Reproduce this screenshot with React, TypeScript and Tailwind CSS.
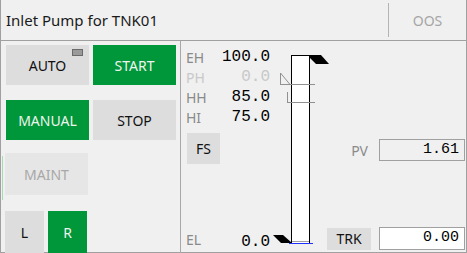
import React from "react";

const sans = { fontFamily: '"Noto Sans", "Open Sans", sans-serif' };
const mono = { fontFamily: '"Liberation Mono", "DejaVu Sans Mono", monospace' };

function Btn({
  children,
  className,
}: {
  children: React.ReactNode;
  className: string;
}) {
  return (
    <div className={`relative flex items-center justify-center text-[14px] ${className}`}>
      {children}
    </div>
  );
}

function ScaleRow({
  label,
  value,
  dim,
}: {
  label: string;
  value: string;
  dim?: boolean;
}) {
  return (
    <div className="flex h-[20px] items-center justify-between">
      <span className={`text-[14px] ${dim ? "text-[#c8c8c8]" : "text-[#8a8a8a]"}`}>{label}</span>
      <span
        className={`text-[16px] leading-none ${dim ? "text-[#c8c8c8]" : "text-black"}`}
        style={mono}
      >
        {value}
      </span>
    </div>
  );
}

export default function App() {
  return (
    <div
      className="flex h-[253px] w-[467px] flex-col border-x border-b border-[#a0a0a0] bg-[#f0f0f0]"
      style={sans}
    >
      {/* title bar */}
      <div className="flex h-[41px] shrink-0 items-stretch border-b border-[#a0a0a0]">
        <div className="flex flex-1 items-center pl-[5px] text-[15px] text-[#1a1a1a]">
          Inlet Pump for TNK01
        </div>
        <div className="my-[3px] w-px bg-[#b4b4b4]" />
        <div className="flex w-[77px] items-center justify-center text-[14px] text-[#a6a6a6]">
          OOS
        </div>
      </div>

      {/* body */}
      <div className="flex flex-1">
        {/* left panel */}
        <div className="flex w-[180px] flex-col border-r border-[#a8a8a8]">
          <div className="ml-[5px] mt-[4px] flex gap-[4px]">
            <Btn className="h-[40px] w-[83px] bg-[#dddddd] text-[#111]">
              AUTO
              <span className="absolute right-[6px] top-[4px] h-[7px] w-[11px] border border-[#6a6a6a] bg-[#9a9a9a]" />
            </Btn>
            <Btn className="h-[40px] w-[83px] bg-[#00963a] text-[#eef4ee]">START</Btn>
          </div>
          <div className="ml-[5px] mt-[15px] flex gap-[4px]">
            <Btn className="h-[40px] w-[83px] bg-[#00963a] text-[#eef4ee]">MANUAL</Btn>
            <Btn className="h-[40px] w-[83px] bg-[#dddddd] text-[#111]">STOP</Btn>
          </div>
          <div className="mt-[13px] flex">
            <div className="ml-px mt-[3px] h-[44px] w-px bg-[#a8dcb0]" />
            <Btn className="ml-[2px] h-[42px] w-[83px] bg-[#e6e6e6] text-[#a8a8a8]">MAINT</Btn>
          </div>
          <div className="ml-[4px] mt-[11px] flex gap-[4px]">
            <Btn className="h-[42px] w-[39px] bg-[#dddddd] text-[#111]">L</Btn>
            <Btn className="h-[42px] w-[39px] bg-[#00963a] text-[#eef4ee]">R</Btn>
          </div>
        </div>

        {/* scale column */}
        <div className="flex w-[89px] flex-col pl-[5px] pt-[6px]">
          <ScaleRow label="EH" value="100.0" />
          <ScaleRow label="PH" value="0.0" dim />
          <ScaleRow label="HH" value="85.0" />
          <ScaleRow label="HI" value="75.0" />
          <div className="ml-px mt-[6px] flex h-[31px] w-[33px] items-center justify-center bg-[#dddddd] text-[14px] text-[#111]">
            FS
          </div>
          <div className="mb-[2px] mt-auto flex items-end justify-between">
            <span className="mb-[2px] text-[14px] leading-[18px] text-[#8a8a8a]">EL</span>
            <span className="text-[16px] leading-[18px] text-black" style={mono}>
              0.0
            </span>
          </div>
        </div>

        {/* bar graphic */}
        <svg width="56" height="210" className="shrink-0 overflow-visible">
          <rect x="21.5" y="14.5" width="18" height="188" fill="#ffffff" stroke="#000" />
          <line x1="22" y1="200.5" x2="39" y2="200.5" stroke="#a0a0a0" />
          <polygon points="39,14 51,14 59,23 46,23 39,16" fill="#000" />
          <polygon points="3,194 13,194 22,202 11,202" fill="#000" />
          <line x1="19" y1="202.5" x2="43" y2="202.5" stroke="#2030ff" />
          <polyline points="10.5,32 10.5,43.5 20,43.5 10.5,32" fill="none" stroke="#909090" />
          <line x1="10" y1="43.5" x2="45" y2="43.5" stroke="#909090" />
          <line x1="17.5" y1="51" x2="17.5" y2="61.5" stroke="#909090" />
          <line x1="17" y1="61.5" x2="45" y2="61.5" stroke="#909090" />
        </svg>

        {/* right column */}
        <div className="flex flex-1 flex-col pr-px">
          <div className="mt-[98px] flex items-center justify-end gap-[11px]">
            <span className="text-[14px] text-[#8a8a8a]">PV</span>
            <div
              className="flex h-[22px] w-[86px] items-center justify-end border border-[#a0a0a0] bg-[#f0f0f0] pr-[5px] text-[15px] text-black"
              style={mono}
            >
              1.61
            </div>
          </div>
          <div className="mb-[3px] mt-auto flex items-center justify-end gap-[8px]">
            <div className="flex h-[22px] w-[44px] items-center justify-center bg-[#dddddd] text-[14px] text-[#111]">
              TRK
            </div>
            <div
              className="flex h-[23px] w-[86px] items-center justify-end border border-[#a0a0a0] bg-white pr-[5px] text-[15px] text-black"
              style={mono}
            >
              0.00
            </div>
          </div>
        </div>
      </div>
    </div>
  );
}
